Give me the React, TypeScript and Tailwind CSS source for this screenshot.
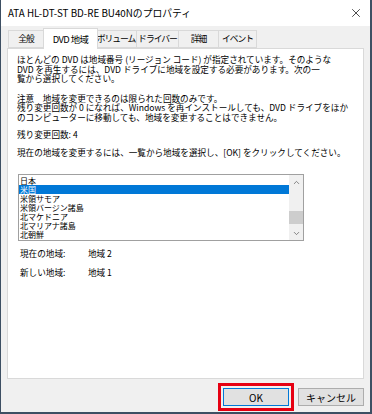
import { ChevronUp, ChevronDown, X } from "lucide-react";

const regions = [
  "日本",
  "米国",
  "米領サモア",
  "米領バージン諸島",
  "北マケドニア",
  "北マリアナ諸島",
  "北朝鮮",
];

const tabs = [
  { label: "全般", w: "w-[36px]" },
  { label: "DVD 地域", w: "w-[55px]" },
  { label: "ボリューム", w: "w-[42px]" },
  { label: "ドライバー", w: "w-[43px]" },
  { label: "詳細", w: "w-[41px]" },
  { label: "イベント", w: "w-[39px]" },
];

export default function App() {
  const font = { fontFamily: '"Noto Sans CJK JP", "Noto Sans", sans-serif' };

  return (
    <div
      className="w-[372px] h-[414px] bg-[#3d4f63] flex flex-col"
      style={font}
    >
      <div className="flex-1 flex flex-col ml-[1px] mr-[2px] mb-[2px] bg-[#f0f0f0]">
        {/* ===== Title bar ===== */}
        <div className="h-[26px] bg-white flex items-center justify-between pl-[7px] pr-[7px]">
          <span className="text-[9.8px] text-black">
            ATA HL-DT-ST BD-RE BU40Nのプロパティ
          </span>
          <X size={14} strokeWidth={1.2} className="text-black" />
        </div>

        {/* ===== Tabs ===== */}
        <div className="flex items-end mt-[3px] px-[7px] h-[19px]">
          {tabs.map((tab, i) =>
            i === 1 ? (
              <div
                key={tab.label}
                className={`${tab.w} h-[21px] -mb-[1px] -ml-[1px] -mr-[2px] flex items-center justify-center bg-white border border-b-0 border-[#d9d9d9] text-[9.4px] tracking-[-0.6px] whitespace-nowrap text-black relative z-10`}
              >
                {tab.label}
              </div>
            ) : (
              <div
                key={tab.label}
                className={`${tab.w} h-[18px] flex items-center justify-center bg-[#f0f0f0] border border-[#d9d9d9] -ml-[1px] first:ml-0 text-[8.8px] tracking-[-1px] whitespace-nowrap text-black`}
              >
                {tab.label}
              </div>
            )
          )}
        </div>

        {/* ===== Panel ===== */}
        <div className="mx-[6px] h-[331px] bg-white border border-[#d9d9d9] pl-[9px] pt-[6px] text-[8.6px] leading-[9.5px] text-black">
          <p className="whitespace-nowrap">
            ほとんどの DVD は地域番号 (リージョン コード) が指定されています。そのような
            <br />
            DVD を再生するには、DVD ドライブに地域を設定する必要があります。次の一
            <br />
            覧から選択してください。
          </p>
          <p className="whitespace-nowrap mt-[10px]">
            注意　地域を変更できるのは限られた回数のみです。
            <br />
            残り変更回数が 0 になれば、Windows を再インストールしても、DVD ドライブをほか
            <br />
            のコンピューターに移動しても、地域を変更することはできません。
          </p>
          <p className="mt-[8px]">残り変更回数: 4</p>
          <p className="mt-[8px] whitespace-nowrap">
            現在の地域を変更するには、一覧から地域を選択し、[OK] をクリックしてください。
          </p>

          {/* ===== Region list ===== */}
          <div className="mt-[17px] ml-[1px] w-[286px] h-[67px] border border-[#a0a0a0] flex">
            <div className="flex-1 pt-[1px] text-[8px]">
              {regions.map((r, i) => (
                <div
                  key={r}
                  className={
                    i === 1
                      ? "h-[9px] leading-[9px] pl-[1px] bg-[#0078d7] text-white overflow-hidden"
                      : "h-[9px] leading-[9px] pl-[1px] overflow-hidden"
                  }
                >
                  {r}
                </div>
              ))}
            </div>
            <div className="w-[14px] bg-[#f0f0f0] flex flex-col items-center">
              <div className="h-[14px] flex items-center justify-center">
                <ChevronUp size={9} strokeWidth={2} className="text-[#606060]" />
              </div>
              <div className="flex-1 w-full flex flex-col justify-end pb-[2px]">
                <div className="h-[13px] w-full bg-[#cdcdcd]" />
              </div>
              <div className="h-[14px] flex items-center justify-center">
                <ChevronDown size={9} strokeWidth={2} className="text-[#606060]" />
              </div>
            </div>
          </div>

          {/* ===== Current / new region ===== */}
          <div className="mt-[8px] ml-[3px] grid grid-cols-[68px_1fr] gap-y-[9px]">
            <span>現在の地域:</span>
            <span>地域 2</span>
            <span>新しい地域:</span>
            <span>地域 1</span>
          </div>
        </div>

        {/* ===== Buttons ===== */}
        <div className="flex justify-end items-center mt-[4px] pr-[6px] gap-[4px]">
          <div className="border-[3px] border-[#e60012] p-[2px]">
            <button className="w-[66px] h-[18px] bg-[#e1e1e1] border border-[#0078d7] text-[10px] text-black flex items-center justify-center">
              OK
            </button>
          </div>
          <button className="w-[66px] h-[18px] bg-[#e1e1e1] border border-[#adadad] text-[10px] text-black flex items-center justify-center">
            キャンセル
          </button>
        </div>
      </div>
    </div>
  );
}
